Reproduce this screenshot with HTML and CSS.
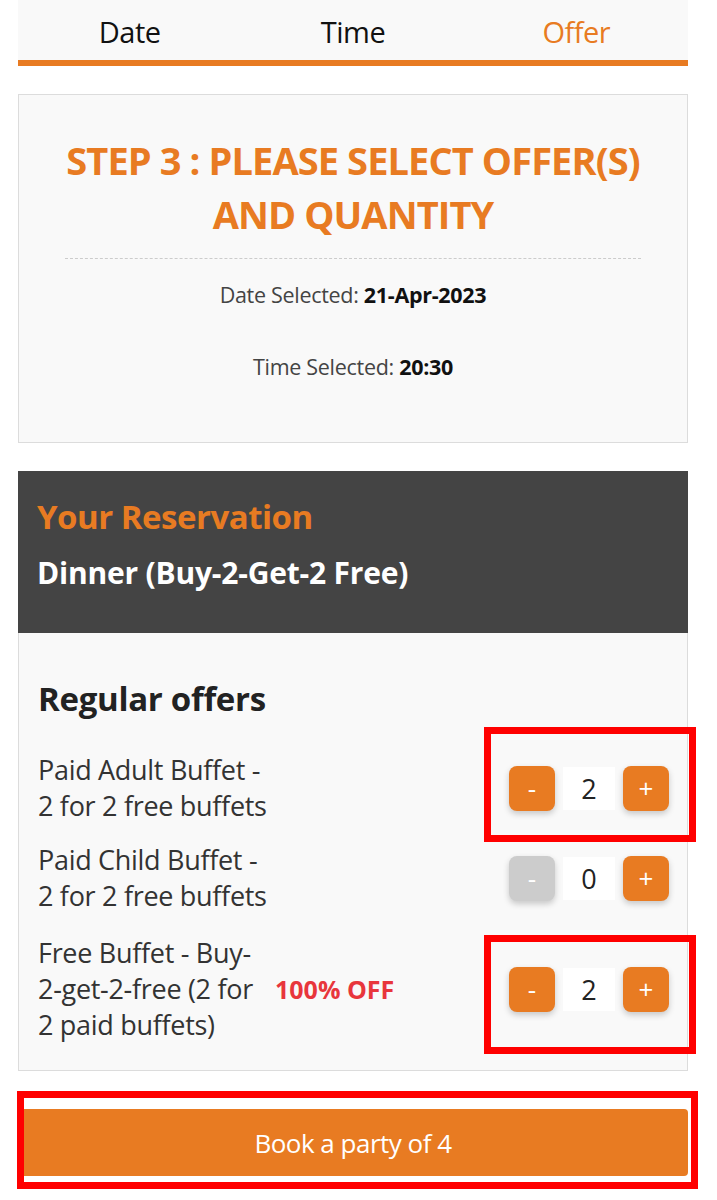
FILE: index.html
```
<!DOCTYPE html>
<html lang="en">

<head>
    <meta charset="UTF-8">
    <meta name="viewport" content="width=device-width, initial-scale=1.0">
    <title>Reservation - Offer</title>
    <link rel="stylesheet" href="styles.css">
</head>

<body>
    <div class="page">
        <nav class="steps">
            <a class="step">Date</a>
            <a class="step">Time</a>
            <a class="step active">Offer</a>
        </nav>

        <section class="summary">
            <h2 class="summary-title">STEP 3 : PLEASE SELECT OFFER(S) AND QUANTITY</h2>
            <p class="summary-line">Date Selected: <b>21-Apr-2023</b></p>
            <p class="summary-line">Time Selected: <b>20:30</b></p>
        </section>

        <section class="reservation">
            <h3 class="reservation-title">Your Reservation</h3>
            <p class="reservation-name">Dinner (Buy-2-Get-2 Free)</p>
        </section>

        <section class="offers">
            <h3 class="offers-title">Regular offers</h3>

            <div class="offer">
                <div class="offer-name">Paid Adult Buffet - 2 for 2 free buffets</div>
                <div class="offer-tag"></div>
                <div class="qty mark mark-top">
                    <button class="qty-btn">-</button>
                    <span class="qty-val">2</span>
                    <button class="qty-btn">+</button>
                </div>
            </div>

            <div class="offer">
                <div class="offer-name">Paid Child Buffet - 2 for 2 free buffets</div>
                <div class="offer-tag"></div>
                <div class="qty">
                    <button class="qty-btn disabled">-</button>
                    <span class="qty-val">0</span>
                    <button class="qty-btn">+</button>
                </div>
            </div>

            <div class="offer">
                <div class="offer-name">Free Buffet - Buy-<wbr>2&#8209;get&#8209;2&#8209;free (2 for 2 paid buffets)</div>
                <div class="offer-tag">100% OFF</div>
                <div class="qty mark mark-bottom">
                    <button class="qty-btn">-</button>
                    <span class="qty-val">2</span>
                    <button class="qty-btn">+</button>
                </div>
            </div>
        </section>

        <div class="book mark mark-book">
            <button class="book-btn">Book a party of 4</button>
        </div>
    </div>
</body>

</html>
```

FILE: styles.css
```
body {
    margin: 0;
    background: #fff;
    font-family: "Open Sans", "Noto Sans", sans-serif;
    color: #333;
}

.page {
    width: 670px;
    margin-left: 18px;
    padding-bottom: 30px;
}

/* step tabs */
.steps {
    display: grid;
    grid-template-columns: 1fr 1fr 1fr;
    background: #f9f9f9;
    border-bottom: 6px solid #e87b22;
    height: 60px;
}

.step {
    text-align: center;
    font-size: 29px;
    line-height: 63px;
    color: #111;
    letter-spacing: -0.5px;
}

.step.active {
    color: #e87b22;
}

/* step summary */
.summary {
    margin-top: 28px;
    background: #f9f9f9;
    border: 1px solid #dcdcdc;
    padding: 38px 46px 42px;
    text-align: center;
    height: 349px;
    box-sizing: border-box;
}

.summary-title {
    margin: 0;
    color: #e87b22;
    font-size: 38px;
    line-height: 54px;
    font-weight: 700;
    letter-spacing: -0.9px;
    padding-bottom: 17px;
    border-bottom: 1px dashed #ccc;
}

.summary-line {
    margin: 22px 0 0;
    font-size: 21.5px;
    line-height: 28px;
    color: #444;
    letter-spacing: -0.3px;
}

.summary-line + .summary-line {
    margin-top: 44px;
}

.summary-line b {
    color: #111;
}

/* reservation header */
.reservation {
    margin-top: 28px;
    background: #444;
    padding: 26px 19px 43px;
}

.reservation-title {
    margin: 0;
    color: #e87b22;
    font-size: 33px;
    line-height: 40px;
    letter-spacing: -0.5px;
}

.reservation-name {
    margin: 19px 0 0;
    color: #fff;
    font-weight: 700;
    font-size: 30px;
    line-height: 34px;
    letter-spacing: -0.2px;
}

/* offers */
.offers {
    background: #f9f9f9;
    border: 1px solid #dcdcdc;
    border-top: none;
    padding: 46px 18px 18px 19px;
}

.offers-title {
    margin: 0 0 24px;
    font-size: 33px;
    line-height: 40px;
    color: #222;
    letter-spacing: -0.3px;
}

.offer {
    display: grid;
    grid-template-columns: 232px 1fr auto;
    align-items: center;
    padding: 9px 0;
}

.offer:last-child {
    padding-top: 12px;
}

.offer-name {
    font-size: 27px;
    line-height: 36px;
    color: #333;
    letter-spacing: -0.3px;
}

.offer-tag {
    color: #e8363c;
    font-weight: 700;
    font-size: 25px;
    padding-left: 5px;
}

.qty {
    display: flex;
    align-items: center;
    gap: 8px;
    position: relative;
}

.qty-btn {
    width: 46px;
    height: 45px;
    border: none;
    border-radius: 8px;
    background: #e87b22;
    color: #fff;
    font-family: inherit;
    font-size: 26px;
    line-height: 1;
    padding: 0;
    box-shadow: 0 3px 6px rgba(0, 0, 0, 0.2);
    cursor: pointer;
}

.qty-btn.disabled {
    background: #ccc;
}

.qty-val {
    width: 52px;
    height: 43px;
    background: #fff;
    text-align: center;
    font-size: 27px;
    line-height: 43px;
    color: #222;
}

/* book button */
.book {
    margin-top: 38px;
    position: relative;
}

.book-btn {
    display: block;
    width: 100%;
    height: 67px;
    border: none;
    border-radius: 4px;
    background: #e87b22;
    color: #fff;
    font-family: inherit;
    font-size: 26px;
    letter-spacing: -0.5px;
}

/* red annotation frames */
.mark::after {
    content: "";
    position: absolute;
    border: 7px solid #f00;
    pointer-events: none;
}

.mark-top::after {
    left: -25px;
    right: -27px;
    top: -39px;
    bottom: -31px;
}

.mark-bottom::after {
    left: -25px;
    right: -27px;
    top: -32px;
    bottom: -42px;
}

.mark-book::after {
    left: -1px;
    right: -10px;
    top: -18px;
    bottom: -13px;
}
```
